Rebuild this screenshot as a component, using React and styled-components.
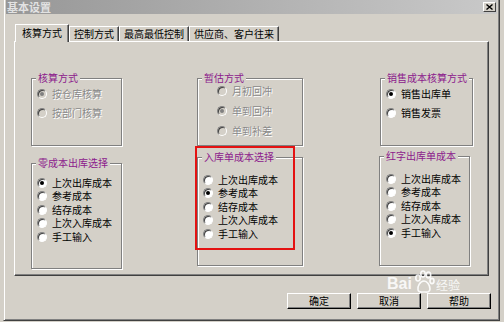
import React from 'react';
import styled, { createGlobalStyle } from 'styled-components';

// ------------------- Styled Components -------------------
const GlobalStyle = createGlobalStyle`
  html, body {
    margin: 0;
    padding: 0;
    background: #d4d0c8;
    font-family: "Noto Sans CJK SC", "Liberation Sans", sans-serif;
    font-size: 10px;
    overflow: hidden;
  }
`;

const Page = styled.div`
  width: 504px;
  height: 322px;
  padding-left: 3px;
  box-sizing: border-box;
`;

const Dialog = styled.div`
  position: relative;
  width: 497px;
  height: 321px;
  box-sizing: border-box;
  padding: 0 2px 2px 2px;
  background: #d4d0c8;
  border-left: 1px solid #d4d0c8;
  border-right: 1px solid #404040;
  border-bottom: 1px solid #404040;
  box-shadow: inset 1px 0 #fff, inset -1px -1px #808080;
  display: flex;
  flex-direction: column;
`;

const TitleBar = styled.div`
  height: 14px;
  display: flex;
  align-items: center;
  justify-content: space-between;
  background: linear-gradient(to right, #979797, #c9c9c9);
  padding-left: 1px;
`;

const Title = styled.span`
  color: #e2e2e2;
  font-size: 11px;
  font-weight: bold;
  line-height: 14px;
  letter-spacing: 0;
`;

const CloseButton = styled.div`
  width: 13px;
  height: 10px;
  margin-right: 1px;
  box-sizing: border-box;
  background: #d4d0c8;
  border: 1px solid;
  border-color: #fff #404040 #404040 #fff;
  display: flex;
  align-items: center;
  justify-content: center;
`;

const Body = styled.div`
  flex: 1;
  display: flex;
  flex-direction: column;
  padding-top: 10px;
`;

const TabStrip = styled.div`
  display: flex;
  align-items: flex-end;
  height: 17px;
  margin-left: 9px;
`;

const Tab = styled.div`
  position: relative;
  box-sizing: border-box;
  display: flex;
  align-items: center;
  height: ${p => (p.$active ? '18px' : '15px')};
  margin-bottom: ${p => (p.$active ? '-1px' : '0')};
  z-index: ${p => (p.$active ? 1 : 0)};
  padding: ${p => (p.$active ? '0 6px 1px 6px' : '0 4px 0 4px')};
  background: #d4d0c8;
  border-top: 1px solid #fff;
  border-left: 1px solid #fff;
  border-right: 1px solid #404040;
  box-shadow: inset -1px 0 #808080;
  color: #000;
  font-size: 10px;
  line-height: 1;
  white-space: nowrap;
`;

const Panel = styled.div`
  margin: 0 8px;
  height: 235px;
  box-sizing: border-box;
  border: 1px solid;
  border-color: #fff #404040 #404040 #fff;
  box-shadow: inset -1px -1px #808080;
  padding-top: 36px;
  display: flex;
  align-items: flex-start;
`;

const Column = styled.div`
  display: flex;
  flex-direction: column;
  margin-left: ${p => p.$ml}px;
`;

const Group = styled.div`
  position: relative;
  box-sizing: border-box;
  width: ${p => p.$w}px;
  height: ${p => p.$h}px;
  margin-top: ${p => p.$mt || 0}px;
  margin-left: ${p => p.$ml || 0}px;
  border: 1px solid #808080;
  box-shadow: inset 1px 1px #fff, 1px 1px #fff;
`;

const Legend = styled.div`
  display: table;
  margin: -7px 0 0 4px;
  padding: 0 2px;
  background: #d4d0c8;
  color: #8c1a8c;
  font-size: 10px;
  line-height: 12px;
  white-space: nowrap;
`;

const RadioList = styled.div`
  display: flex;
  flex-direction: column;
  margin-top: ${p => p.$mt}px;
  padding-left: ${p => p.$pl}px;
`;

const RadioRow = styled.div`
  display: flex;
  align-items: center;
  gap: 5px;
  height: ${p => p.$h}px;
`;

const RadioCircle = styled.span`
  position: relative;
  width: 10px;
  height: 10px;
  box-sizing: border-box;
  border-radius: 50%;
  border: 1px solid;
  border-color: #808080 #fff #fff #808080;
  background: ${p => (p.$disabled ? '#d4d0c8' : '#fff')};
  box-shadow: inset 1px 1px 0 #404040;
  flex: none;

  &::after {
    content: '';
    display: ${p => (p.$checked ? 'block' : 'none')};
    position: absolute;
    left: 2px;
    top: 2px;
    width: 4px;
    height: 4px;
    border-radius: 50%;
    background: ${p => (p.$disabled ? '#808080' : '#000')};
  }
`;

const RadioLabel = styled.span`
  color: ${p => (p.$disabled ? '#8a8a8a' : '#000')};
  text-shadow: ${p => (p.$disabled ? '1px 1px 0 #fff' : 'none')};
  font-size: 10px;
  line-height: 1;
  white-space: nowrap;
`;

const Highlight = styled.div`
  position: absolute;
  left: -3px;
  top: -12px;
  width: 100px;
  height: 104px;
  box-sizing: border-box;
  border: 2px solid #e41212;
  pointer-events: none;
`;

const ButtonRow = styled.div`
  display: flex;
  justify-content: flex-end;
  gap: 6px;
  margin-top: 17px;
  padding-right: 6px;
`;

const Button = styled.div`
  width: 64px;
  height: 16px;
  box-sizing: border-box;
  display: flex;
  align-items: center;
  justify-content: center;
  background: #d4d0c8;
  border: 1px solid;
  border-color: #fff #000 #000 #fff;
  box-shadow: inset -1px -1px #808080;
  color: #000;
  font-size: 10px;
  line-height: 1;
`;

const Watermark = styled.div`
  position: absolute;
  left: 383px;
  top: 270px;
  display: flex;
  align-items: flex-end;
  gap: 1px;
  color: rgba(255, 255, 255, 0.85);
  pointer-events: none;
`;

const MarkText = styled.span`
  font-family: "Liberation Sans", Arial, sans-serif;
  font-size: ${p => p.$size}px;
  font-weight: bold;
  line-height: 1;
  margin-bottom: 4px;
`;

const MarkCjk = styled.span`
  font-size: 12px;
  line-height: 1;
  margin-bottom: 5px;
`;
// -----------------------------------------------------------

const costItems = ['上次出库成本', '参考成本', '结存成本', '上次入库成本', '手工输入'];

const columns = [
  {
    ml: 16,
    groups: [
      { title: '核算方式', w: 91, h: 68, listMt: 0, rowH: 19, pl: 5, disabled: true, checked: 0, items: ['按仓库核算', '按部门核算'] },
      { title: '零成本出库选择', w: 91, h: 106, mt: 17, listMt: 7, rowH: 13.5, pl: 5, checked: 0, items: costItems },
    ],
  },
  {
    ml: 75,
    groups: [
      { title: '暂估方式', w: 106, h: 68, listMt: -3, rowH: 20, pl: 19, disabled: true, checked: 1, items: ['月初回冲', '单到回冲', '单到补差'] },
      { title: '入库单成本选择', w: 106, h: 109, mt: 11, listMt: 10, rowH: 13.5, pl: 5, checked: 1, items: costItems, highlight: true },
    ],
  },
  {
    ml: 76,
    groups: [
      { title: '销售成本核算方式', w: 93, h: 68, gml: 1, listMt: 0, rowH: 19, pl: 5, checked: 0, items: ['销售出库单', '销售发票'] },
      { title: '红字出库单成本', w: 91, h: 110, mt: 10, listMt: 10, rowH: 13.5, pl: 6, checked: 4, items: costItems },
    ],
  },
];

const tabs = ['核算方式', '控制方式', '最高最低控制', '供应商、客户往来'];

const Radio = ({ label, checked, disabled, h }) => (
  <RadioRow $h={h}>
    <RadioCircle $checked={checked} $disabled={disabled} />
    <RadioLabel $disabled={disabled}>{label}</RadioLabel>
  </RadioRow>
);

const Paw = () => (
  <svg width="22" height="26" viewBox="0 0 22 26" fill="none" stroke="rgba(255,255,255,0.9)" strokeWidth="1.6">
    <ellipse cx="5" cy="8" rx="2.2" ry="3" />
    <ellipse cx="10" cy="4" rx="2.2" ry="3" />
    <ellipse cx="15.5" cy="5" rx="2.2" ry="3" />
    <ellipse cx="19" cy="11" rx="2" ry="2.6" />
    <path d="M11 11 C7 11 4 17 5 20 C6 23 9 22 11 22 C13 22 17 23 17 19 C17 15 14 11 11 11 Z" />
  </svg>
);

export default function App() {
  return (
    <Page>
      <GlobalStyle />
      <Dialog>
        <TitleBar>
          <Title>基本设置</Title>
          <CloseButton>
            <svg width="7" height="6" viewBox="0 0 7 6">
              <path d="M0.5 0.5 L6.5 5.5 M6.5 0.5 L0.5 5.5" stroke="#000" strokeWidth="1.4" />
            </svg>
          </CloseButton>
        </TitleBar>
        <Body>
          <TabStrip>
            {tabs.map((t, i) => (
              <Tab key={t} $active={i === 0}>{t}</Tab>
            ))}
          </TabStrip>
          <Panel>
            {columns.map((col, ci) => (
              <Column key={ci} $ml={col.ml}>
                {col.groups.map(g => (
                  <Group key={g.title} $w={g.w} $h={g.h} $mt={g.mt} $ml={g.gml}>
                    <Legend>{g.title}</Legend>
                    <RadioList $mt={g.listMt} $pl={g.pl}>
                      {g.items.map((item, i) => (
                        <Radio key={item} label={item} h={g.rowH} checked={i === g.checked} disabled={g.disabled} />
                      ))}
                    </RadioList>
                    {g.highlight && <Highlight />}
                  </Group>
                ))}
              </Column>
            ))}
          </Panel>
          <ButtonRow>
            <Button>确定</Button>
            <Button>取消</Button>
            <Button>帮助</Button>
          </ButtonRow>
        </Body>
        <Watermark>
          <MarkText $size={16}>Bai</MarkText>
          <Paw />
          <MarkCjk>经验</MarkCjk>
        </Watermark>
      </Dialog>
    </Page>
  );
}
